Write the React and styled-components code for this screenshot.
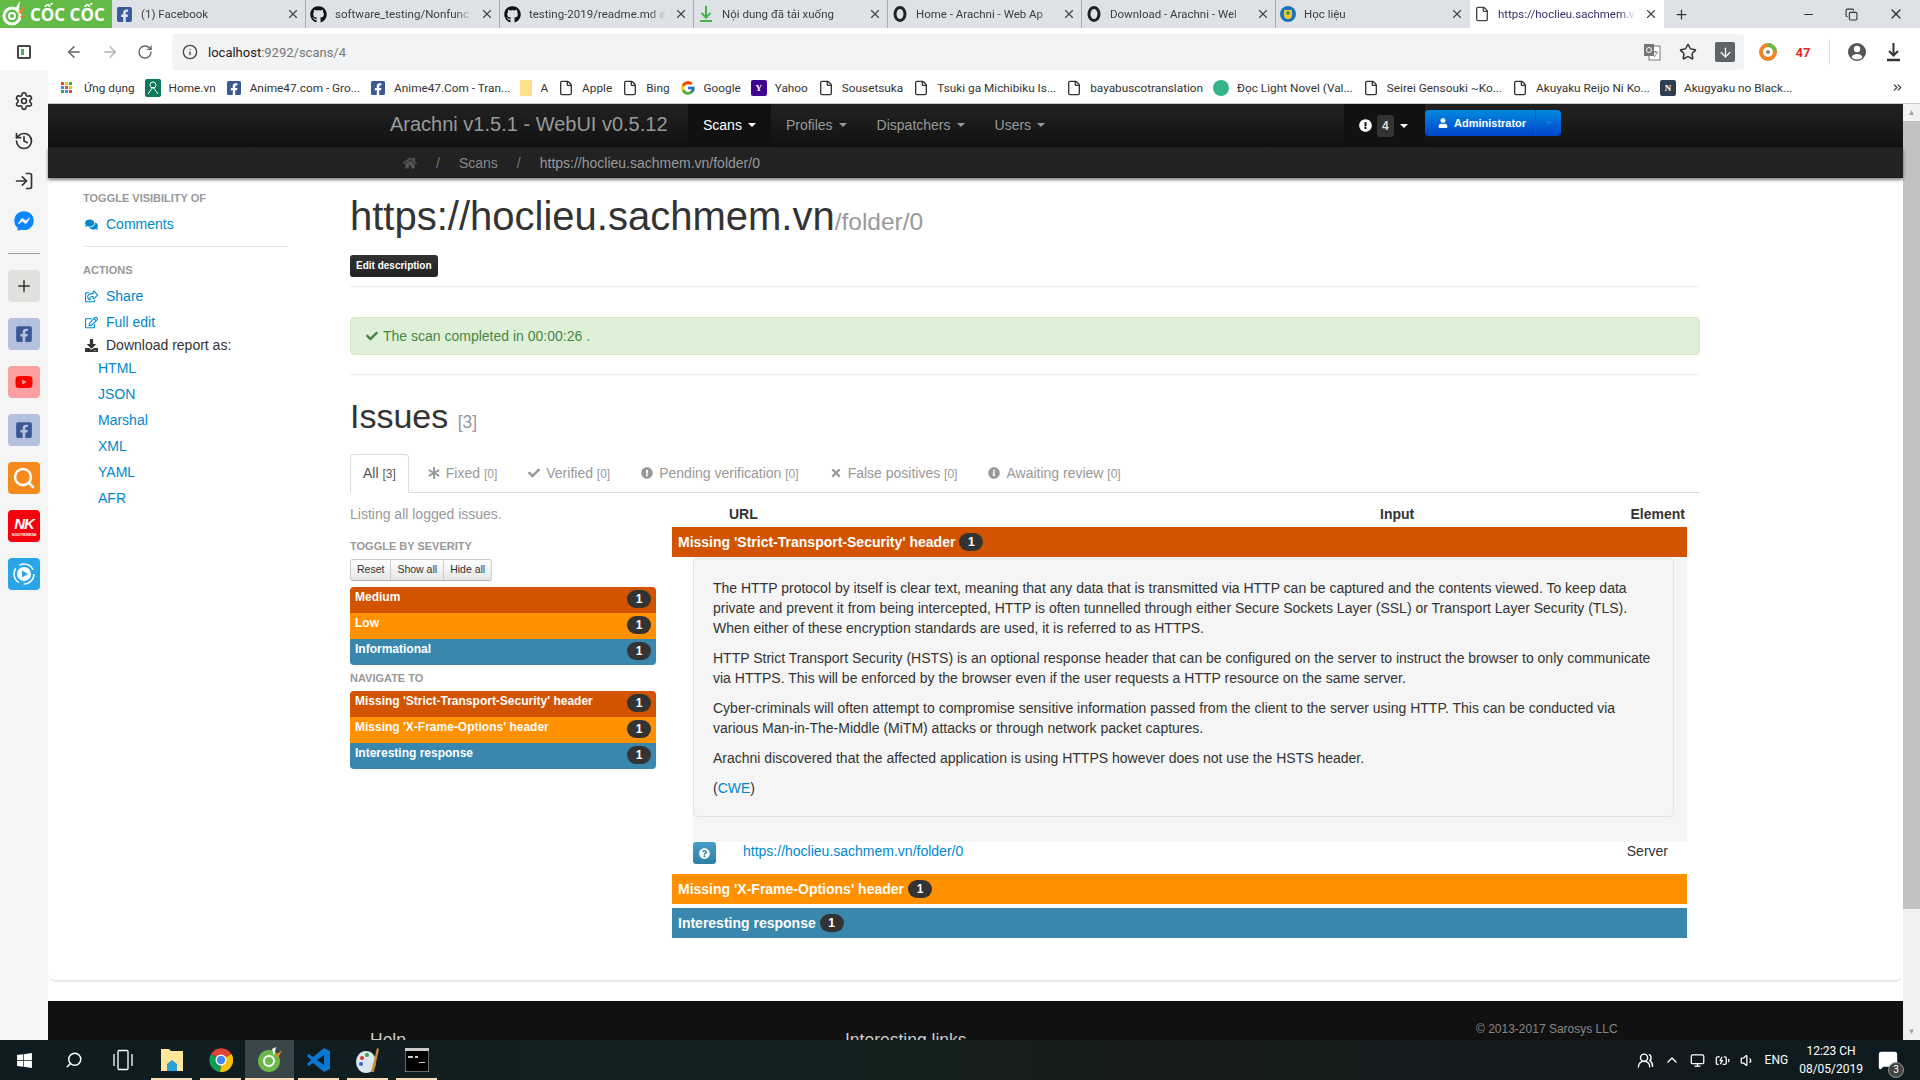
import React from 'react';
import styled, { createGlobalStyle } from 'styled-components';
import {
  FaAsterisk, FaCheck, FaComments, FaDownload, FaExclamationCircle, FaFacebookMessenger, FaFacebookSquare,
  FaGithub, FaHome, FaInfoCircle, FaQuestionCircle, FaRegEdit, FaRegShareSquare, FaTimes, FaUser, FaWindows, FaYoutube,
} from 'react-icons/fa';
import { FcGoogle } from 'react-icons/fc';
import {
  ArrowDown, ArrowLeft, ArrowRight, ChevronUp, Copy, File, History, LogIn, Minus, Plus, RotateCw, Search,
  Settings, Star, Volume1, X, Info, UsersRound, Monitor, BatteryCharging, MessageSquare, ChevronsRight,
} from 'lucide-react';

const Global = createGlobalStyle`
  html, body { margin: 0; padding: 0; overflow: hidden; background: #fff; }
  * { box-sizing: border-box; }
  body { font-family: "Liberation Sans", Arial, sans-serif; font-size: 14px; color: #333; }
`;

const Screen = styled.div`
  width: 1920px;
  height: 1080px;
  display: flex;
  flex-direction: column;
  overflow: hidden;
`;

/* browser chrome */
const TabStrip = styled.div`
  height: 28px;
  flex: none;
  display: flex;
  background: #dee1e6;
`;
const Logo = styled.div`
  width: 112px;
  flex: none;
  background: #62bb46;
  display: flex;
  align-items: center;
  gap: 3px;
  padding-left: 1px;
  color: #fff;
  font: bold 17px "Open Sans", sans-serif;
  white-space: nowrap;
`;
const Tab = styled.div`
  width: 194px;
  flex: none;
  display: flex;
  align-items: center;
  padding: 0 5px 0 4px;
  gap: 8px;
  font: 11.5px "Roboto", sans-serif;
  color: ${(p) => (p.$active ? '#3c2a6d' : '#3c4043')};
  background: ${(p) => (p.$active ? '#fff' : 'transparent')};
  border-right: 1px solid ${(p) => (p.$active || p.$last ? 'transparent' : '#a9acb0')};
  svg { flex: none; }
`;
const TabTitle = styled.span`
  flex: 1;
  white-space: nowrap;
  -webkit-mask-image: linear-gradient(to right, #000 88%, transparent);
  mask-image: linear-gradient(to right, #000 88%, transparent);
`;
const Spring = styled.div`
  flex: 1;
`;
const WindowBtns = styled.div`
  display: flex;
  align-items: center;
  gap: 30px;
  padding-right: 16px;
  color: #333;
`;
const NewTab = styled.div`
  display: flex;
  align-items: center;
  padding-left: 10px;
`;

const Toolbar = styled.div`
  height: 42px;
  flex: none;
  display: flex;
  align-items: center;
  background: #fff;
  padding-top: 6px;
  color: #5f6368;
`;
const NavIcons = styled.div`
  display: flex;
  align-items: center;
  gap: 18px;
  padding-left: 65px;
  padding-right: 19px;
`;
const Omnibox = styled.div`
  width: 1572px;
  height: 36px;
  flex: none;
  background: #f1f3f4;
  border-radius: 4px;
  display: flex;
  align-items: center;
  padding: 0 9px 0 10px;
  gap: 10px;
  font: 13px "Roboto", sans-serif;
  color: #777;
  b { font-weight: 400; color: #222; }
`;
const OmniTools = styled.div`
  display: flex;
  align-items: center;
  margin-left: auto;
  gap: 18px;
`;
const DownloadChip = styled.div`
  width: 20px;
  height: 20px;
  background: #5f6368;
  border-radius: 2px;
  color: #fff;
  display: flex;
  align-items: center;
  justify-content: center;
`;
const ToolRight = styled.div`
  display: flex;
  align-items: center;
  padding-left: 15px;
  gap: 18.5px;
`;
const RedCount = styled.span`
  color: #e8281f;
  font: bold 13px "Roboto", sans-serif;
`;
const ToolSep = styled.div`
  width: 1px;
  height: 26px;
  background: #ddd;
`;

const BookmarkBar = styled.div`
  height: 34px;
  flex: none;
  display: flex;
  align-items: center;
  background: #fff;
  padding: 2px 16px 0 61px;
  gap: 10px;
  font: 11.8px "Roboto", sans-serif;
  color: #333;
  border-bottom: 1px solid #ccc;
`;
const Bookmark = styled.div`
  display: flex;
  align-items: center;
  gap: ${(p) => p.$gap || 8}px;
  white-space: nowrap;
  svg { flex: none; }
`;
const AppsGrid = styled.div`
  display: grid;
  grid-template-columns: repeat(3, 3px);
  grid-auto-rows: 3px;
  gap: 1px;
`;
const AppDot = styled.i`
  background: ${(p) => p.$c};
`;
const Square = styled.div`
  width: ${(p) => p.$w || 16}px;
  height: 16px;
  flex: none;
  background: ${(p) => p.$bg};
  color: #fff;
  border-radius: ${(p) => p.$r || 2}px;
  display: flex;
  align-items: center;
  justify-content: center;
  font: bold 9px "Liberation Serif", serif;
`;

const Middle = styled.div`
  flex: 1;
  min-height: 0;
  display: flex;
`;

/* browser side rail, it starts up beside the address bar */
const Rail = styled.div`
  width: 48px;
  flex: none;
  background: #f5f5f5;
  display: flex;
  flex-direction: column;
  align-items: center;
  color: #333;
  margin-top: -70px;
  position: relative;
  height: calc(100% + 70px);
`;
const RailTop = styled.div`
  background: #fff;
  width: 48px;
  height: 36px;
  display: flex;
  align-items: center;
  justify-content: center;
`;
const RailIcons = styled.div`
  display: flex;
  flex-direction: column;
  align-items: center;
  gap: 20px;
  padding-top: 21px;
`;
const RailDivider = styled.div`
  width: 32px;
  height: 1px;
  background: #999;
  margin: 22px 0 16px;
`;
const RailApps = styled.div`
  display: flex;
  flex-direction: column;
  gap: 16px;
`;
const RailApp = styled.div`
  width: 32px;
  height: 32px;
  border-radius: 4px;
  background: ${(p) => p.$bg};
  color: ${(p) => p.$fg || '#fff'};
  display: flex;
  flex-direction: column;
  align-items: center;
  justify-content: center;
  line-height: 1;
`;
const NkMark = styled.span`
  font: italic bold 15px "Liberation Sans", sans-serif;
  letter-spacing: -1px;
`;
const NkSub = styled.span`
  font: bold 4px "Liberation Sans", sans-serif;
`;

/* the page */
const Viewport = styled.div`
  flex: 1;
  min-width: 0;
  display: flex;
  flex-direction: column;
  background: #fff;
`;
const NavBar = styled.div`
  height: 43px;
  flex: none;
  display: flex;
  align-items: stretch;
  padding-left: 342px;
  background: linear-gradient(#222, #111);
  font-size: 14px;
  color: #999;
`;
const Brand = styled.div`
  font-size: 20px;
  line-height: 40px;
  width: 298px;
  white-space: nowrap;
`;
const NavItem = styled.div`
  display: flex;
  align-items: center;
  gap: 5px;
  padding: 0 15px 2px;
  background: ${(p) => (p.$active ? '#111' : 'transparent')};
  color: ${(p) => (p.$active ? '#fff' : '#999')};
`;
const Caret = styled.i`
  width: 0;
  height: 0;
  border-top: 4px solid currentColor;
  border-left: 4px solid transparent;
  border-right: 4px solid transparent;
  margin-left: 1px;
`;
const NavRight = styled.div`
  display: flex;
  margin-left: auto;
  align-items: stretch;
  margin-right: 342px;
`;
const Alerts = styled.div`
  width: 81px;
  background: #111;
  color: #fff;
  display: flex;
  align-items: center;
  gap: 5px;
  padding-left: 15px;
`;
const AlertCount = styled.span`
  background: #333;
  border-radius: 3px;
  padding: 2px 5px;
  height: 22px;
  font: bold 12px/18px "Liberation Sans", sans-serif;
  color: #ddd;
`;
const AdminBtn = styled.div`
  height: 26px;
  margin-top: 6px;
  width: 136px;
  display: flex;
  border-radius: 4px;
  background: linear-gradient(#0088dd, #0044cc);
  color: #fff;
  font: bold 11px/25px "Liberation Sans", sans-serif;
`;
const AdminLabel = styled.div`
  flex: 1;
  display: flex;
  align-items: center;
  gap: 6px;
  padding-left: 13px;
  border-right: 1px solid #0a5cc4;
`;
const AdminCaret = styled.div`
  width: 25px;
  display: flex;
  align-items: center;
  justify-content: center;
  color: #0a7fe0;
`;
const Crumbs = styled.div`
  height: 31px;
  flex: none;
  display: flex;
  align-items: center;
  padding-left: 355px;
  gap: 19px;
  background: #222;
  color: #777;
  box-shadow: 0 2px 3px rgba(0, 0, 0, 0.5);
  position: relative;
  z-index: 2;
`;
const Crumb = styled.span`
  color: ${(p) => p.$c || '#888'};
`;

const Card = styled.div`
  height: 804px;
  flex: none;
  display: flex;
  border-bottom: 2px solid #e8e8e8;
  border-radius: 0 0 8px 8px;
  overflow: hidden;
`;
const SideCol = styled.div`
  width: 302px;
  flex: none;
  padding: 13px 0 0 35px;
`;
const SideHead = styled.div`
  font-size: 11px;
  font-weight: bold;
  color: #999;
  text-transform: uppercase;
  line-height: 14px;
  margin-bottom: 6px;
`;
const SideLink = styled.div`
  display: flex;
  align-items: center;
  gap: 8px;
  height: ${(p) => p.$h || 26}px;
  padding-left: 2px;
  color: ${(p) => p.$c || '#0088cc'};
  white-space: nowrap;
`;
const SideList = styled.div`
  padding-left: 15px;
`;
const SideSubLink = styled.div`
  height: 26px;
  line-height: 26px;
  color: #0088cc;
`;
const SideRule = styled.div`
  width: 204px;
  height: 1px;
  background: #e5e5e5;
  margin: 9px 0 16px 1px;
`;

const MainCol = styled.div`
  width: 1350px;
  flex: none;
`;
const Title = styled.h1`
  margin: 13px 0 0;
  height: 50px;
  font-size: 40px;
  line-height: 50px;
  font-weight: 400;
  color: #333;
  white-space: nowrap;
`;
const TitleRest = styled.small`
  font-size: 24.5px;
  color: #999;
`;
const DarkBtn = styled.div`
  width: fit-content;
  margin-top: 14px;
  height: 22px;
  padding: 0 6px;
  background: linear-gradient(#333, #222);
  border-radius: 3px;
  color: #fff;
  font-size: 10px;
  font-weight: bold;
  line-height: 21px;
`;
const Rule = styled.div`
  height: 1px;
  background: #eee;
  margin: ${(p) => p.$m};
`;
const Success = styled.div`
  height: 38px;
  background: #dff0d8;
  border: 1px solid #d6e9c6;
  border-radius: 4px;
  color: #468847;
  display: flex;
  align-items: center;
  gap: 5px;
  padding-left: 15px;
`;
const H2 = styled.h2`
  margin: 21px 0 0;
  height: 40px;
  font-size: 34px;
  line-height: 40px;
  font-weight: 400;
  color: #333;
`;
const H2Count = styled.small`
  font-size: 17.5px;
  color: #999;
`;
const TabsRow = styled.div`
  display: flex;
  height: 39px;
  margin-top: 18px;
  border-bottom: 1px solid #ddd;
`;
const PageTab = styled.div`
  height: ${(p) => (p.$active ? 39 : 38)}px;
  display: flex;
  align-items: center;
  gap: 6px;
  white-space: nowrap;
  padding: 0 12px ${(p) => (p.$active ? 1 : 0)}px;
  margin-right: 7px;
  color: ${(p) => (p.$active ? '#555' : '#999')};
  background: #fff;
  ${(p) => p.$active && 'border: 1px solid #ddd; border-bottom-color: #fff; border-radius: 4px 4px 0 0;'}
  small { font-size: 12px; }
`;
const Columns = styled.div`
  display: flex;
  gap: 16px;
`;
const FilterCol = styled.div`
  width: 306px;
  flex: none;
`;
const Muted = styled.div`
  color: #999;
  line-height: 20px;
  margin-top: 11px;
`;
const FilterHead = styled.div`
  font-size: 11px;
  font-weight: bold;
  color: #999;
  line-height: 14px;
  text-transform: uppercase;
  margin: ${(p) => p.$m};
`;
const BtnGroup = styled.div`
  display: flex;
  width: fit-content;
  height: 22px;
  border: 1px solid #ccc;
  border-bottom-color: #b3b3b3;
  border-radius: 3px;
  background: linear-gradient(#fff, #e6e6e6);
  font-size: 10.5px;
  line-height: 19px;
  color: #333;
`;
const GroupBtn = styled.div`
  padding: 0 6px;
  & + & { border-left: 1px solid #ccc; }
`;
const SevList = styled.div`
  border-radius: 4px;
  overflow: hidden;
  margin-top: ${(p) => p.$mt}px;
`;
const SevRow = styled.div`
  height: 26px;
  display: flex;
  justify-content: space-between;
  padding: 3px 5px 0 5px;
  background: ${(p) => p.$bg};
  color: #fff;
  font-size: 12px;
  font-weight: bold;
  line-height: 15px;
`;
const CountBadge = styled.span`
  width: 24px;
  height: 18px;
  border-radius: 9px;
  background: #333;
  color: #fff;
  font-size: 12px;
  font-weight: bold;
  line-height: 18px;
  text-align: center;
  flex: none;
  display: inline-block;
`;

const IssuesCol = styled.div`
  width: 1015px;
  flex: none;
`;
const IssueHead = styled.div`
  display: grid;
  grid-template-columns: 651px 1fr auto;
  height: 23px;
  margin-top: 11px;
  padding: 0 2px 0 57px;
  font-weight: bold;
  line-height: 20px;
`;
const IssueBar = styled.div`
  height: 30px;
  display: flex;
  align-items: center;
  gap: 4px;
  padding-left: 6px;
  background: ${(p) => p.$bg};
  color: #fff;
  font-size: 14px;
  font-weight: bold;
  margin-top: ${(p) => p.$mt || 0}px;
`;
const IssueBody = styled.div`
  margin: 1px 0 0 21px;
  background: #f5f5f5;
`;
const Well = styled.div`
  width: 981px;
  height: 259px;
  background: #f5f5f5;
  border: 1px solid #e3e3e3;
  border-radius: 4px;
  padding: 19px 19px 0;
  line-height: 20px;
  p { margin: 0 0 10px; }
`;
const WellLink = styled.span`
  color: #0088cc;
`;
const WellGap = styled.div`
  height: 25px;
`;
const IssueRow = styled.div`
  display: flex;
  align-items: flex-start;
  height: 32px;
  margin-left: 21px;
  padding-right: 19px;
`;
const SevBtn = styled.div`
  width: 23px;
  height: 22px;
  border-radius: 3px;
  background: linear-gradient(#46a0c8, #2f7ea3);
  color: #fff;
  display: flex;
  align-items: center;
  justify-content: center;
`;
const IssueUrl = styled.div`
  color: #0088cc;
  margin-left: 27px;
  flex: 1;
  line-height: 18px;
`;
const IssueEl = styled.div`
  line-height: 18px;
`;

const FooterGap = styled.div`
  height: 19px;
  flex: none;
`;
const Footer = styled.div`
  flex: 1;
  background: #111;
  display: flex;
  padding: 29px 0 0 322px;
  color: #ccc;
  overflow: hidden;
`;
const FooterHead = styled.div`
  font-size: 17.5px;
  width: 475px;
`;
const Copyright = styled.div`
  font-size: 12px;
  color: #888;
  margin: -8px 0 0 156px;
`;

const Scrollbar = styled.div`
  width: 17px;
  flex: none;
  background: #f1f1f1;
  display: flex;
  flex-direction: column;
  align-items: center;
  color: #a3a3a3;
  font-size: 8px;
`;
const ScrollArrow = styled.div`
  height: 17px;
  line-height: 17px;
`;
const Thumb = styled.div`
  width: 100%;
  height: 788px;
  background: #c1c1c1;
`;

/* windows taskbar */
const Taskbar = styled.div`
  height: 40px;
  flex: none;
  display: flex;
  align-items: center;
  background: linear-gradient(90deg, #0e1c22, #13211f 45%, #161c1a 60%, #0e1a20);
  color: #fff;
`;
const TaskSlot = styled.div`
  width: ${(p) => (p.$on ? 49 : 41)}px;
  margin: 0 ${(p) => (p.$on ? 0 : 4)}px;
  height: 40px;
  flex: none;
  display: flex;
  align-items: center;
  justify-content: center;
  background: ${(p) => (p.$on ? 'rgba(255,255,255,0.18)' : 'transparent')};
  box-shadow: ${(p) => (p.$run ? 'inset 0 -2px 0 #ffdcb5' : 'none')};
`;
const MirrorSearch = styled(Search)`
  transform: scaleX(-1);
`;
const Tray = styled.div`
  margin-left: auto;
  display: flex;
  align-items: center;
  gap: 10px;
  padding-right: 22px;
  font: 12px "Roboto", sans-serif;
`;
const Clock = styled.div`
  text-align: center;
  line-height: 18px;
  padding: 0 5px 0 1px;
`;
const Notify = styled.div`
  position: relative;
  display: flex;
`;
const NotifyBadge = styled.span`
  position: absolute;
  right: -6px;
  bottom: -8px;
  width: 16px;
  height: 16px;
  border-radius: 50%;
  background: #444;
  border: 1px solid #999;
  font-size: 10px;
  line-height: 14px;
  text-align: center;
`;

const CocCocMark = ({ size = 26 }) => (
  <svg width={size} height={size} viewBox="0 0 26 26">
    <circle cx="11" cy="15" r="8" fill="none" stroke="#fff" strokeWidth="3" />
    <circle cx="11" cy="15" r="3" fill="none" stroke="#fff" strokeWidth="2" />
    <path d="M14 8 L19 0 L18 8Z" fill="#fff" />
    <path d="M17 11 L25 5 L20 13Z" fill="#f58220" />
    <path d="M19 15 L26 14 L20 17Z" fill="#f58220" />
  </svg>
);

const RingFavicon = () => (
  <svg width="16" height="16" viewBox="0 0 16 16">
    <ellipse cx="8" cy="8" rx="5" ry="6.5" fill="none" stroke="#222" strokeWidth="3" />
  </svg>
);

const GlobeFavicon = () => (
  <svg width="16" height="16" viewBox="0 0 16 16">
    <circle cx="8" cy="8" r="8" fill="#1b75bb" />
    <path d="M4 4h8v5a4 4 0 0 1-8 0z" fill="#f4c430" />
    <circle cx="8" cy="7" r="2" fill="#4a9a4a" />
  </svg>
);

const DownloadGreen = () => (
  <svg width="16" height="18" viewBox="0 0 16 18">
    <path d="M8 1v11M3.5 8 8 12.5 12.5 8" fill="none" stroke="#4caf50" strokeWidth="2" />
    <path d="M2 16h12" stroke="#4caf50" strokeWidth="2" />
  </svg>
);

const TranslateIcon = () => (
  <svg width="18" height="18" viewBox="0 0 18 18">
    <rect x="6" y="3" width="11" height="14" fill="#fff" stroke="#777" />
    <rect x="1" y="1" width="10" height="12" fill="#777" />
    <circle cx="6" cy="7" r="2.5" fill="none" stroke="#fff" />
    <path d="M10 9h5M12.5 8v1M11 14l3-4" stroke="#777" fill="none" />
  </svg>
);

const ProfileIcon = () => (
  <svg width="18" height="20" viewBox="0 0 18 20">
    <circle cx="9" cy="10" r="9" fill="#555" />
    <circle cx="9" cy="7" r="3.2" fill="#fff" />
    <path d="M3.5 15.5c1-3 3-3.5 5.5-3.5s4.500.5 5.500 3.500c-3 2.600-8 2.600-11 0z" fill="#fff" />
  </svg>
);

const SaveIcon = () => (
  <svg width="17" height="20" viewBox="0 0 17 20">
    <path d="M8.500 1v12M4 9l4.500 4.500L13 9" fill="none" stroke="#333" strokeWidth="2" />
    <path d="M2 18h13" stroke="#333" strokeWidth="2.500" />
  </svg>
);

const ChromeLogo = () => (
  <svg width="24" height="24" viewBox="0 0 24 24">
    <path d="M12 12 L2 6 A12 12 0 0 1 22.5 6Z" fill="#db4437" />
    <path d="M12 12 L22.5 6 A12 12 0 0 1 11 24Z" fill="#f4c20d" />
    <path d="M12 12 L11 24 A12 12 0 0 1 2 6Z" fill="#0f9d58" />
    <circle cx="12" cy="12" r="5.5" fill="#fff" />
    <circle cx="12" cy="12" r="4.2" fill="#4285f4" />
  </svg>
);

const CocCocTask = () => (
  <svg width="26" height="26" viewBox="0 0 26 26">
    <circle cx="12" cy="14" r="11" fill="#6cb84a" />
    <circle cx="12" cy="14" r="5" fill="none" stroke="#fff" strokeWidth="2" />
    <path d="M15 2 L19 0 L17 9Z" fill="#fff" />
    <path d="M19 8 L25 3 L21 11Z" fill="#f58220" />
  </svg>
);

const FolderIcon = () => (
  <svg width="24" height="26" viewBox="0 0 24 26">
    <path d="M1 2h8l2 2h12v20H1z" fill="#ffe79a" />
    <path d="M7 24v-7l5-4 5 4v7z" fill="#2a9fd8" />
  </svg>
);

const TaskViewIcon = () => (
  <svg width="20" height="22" viewBox="0 0 20 22">
    <rect x="5" y="1.500" width="10" height="19" rx="1" fill="none" stroke="#fff" strokeWidth="1.300" />
    <path d="M1 5v12M19 5v12" stroke="#fff" strokeWidth="1.300" />
  </svg>
);

const VsCodeIcon = () => (
  <svg width="24" height="26" viewBox="0 0 24 26">
    <path d="M17 1 L23 4 V22 L17 25 L6 16 L2 19 L0 17 L4 13 L0 9 L2 7 L6 10Z M17 8 L10 13 L17 18Z" fill="#0a78d0" fillRule="evenodd" />
  </svg>
);

const PaintIcon = () => (
  <svg width="26" height="28" viewBox="0 0 26 28">
    <ellipse cx="11" cy="16" rx="10" ry="11" fill="#dce6ef" />
    <circle cx="7" cy="12" r="2" fill="#d33" />
    <circle cx="12" cy="9" r="2" fill="#3a3" />
    <circle cx="6" cy="18" r="2" fill="#36c" />
    <path d="M16 26 L22 2 L24 3 L19 26Z" fill="#c58a3c" />
  </svg>
);

const CmdIcon = () => (
  <svg width="24" height="24" viewBox="0 0 24 24">
    <rect width="24" height="24" fill="#000" stroke="#ccc" />
    <rect width="24" height="3" fill="#ccc" />
    <path d="M3 8h5v2H3zM10 8h3v2h-3zM14 14h6v1h-6z" fill="#ccc" />
  </svg>
);

const ShieldFavicon = () => (
  <svg width="16" height="18" viewBox="0 0 16 18">
    <rect width="16" height="18" rx="2" fill="#0b7a5b" />
    <circle cx="8" cy="6" r="3" fill="none" stroke="#fff" />
    <path d="M3 15 L8 8 L13 15" fill="none" stroke="#fff" />
  </svg>
);

const RingColored = () => (
  <svg width="18" height="20" viewBox="0 0 18 20">
    <circle cx="9" cy="10" r="7" fill="none" stroke="#f58220" strokeWidth="4" />
    <path d="M9 3a7 7 0 0 1 7 6" fill="none" stroke="#6cb84a" strokeWidth="4" />
    <circle cx="9" cy="10" r="2" fill="#888" />
  </svg>
);

const PlayEye = () => (
  <svg width="26" height="26" viewBox="0 0 26 26">
    <circle cx="13" cy="13" r="7" fill="#fff" />
    <circle cx="13" cy="13" r="10" fill="none" stroke="#fff" strokeWidth="1.5" strokeDasharray="16 5" />
    <path d="M11 9.5 L17 13 L11 16.5Z" fill="#2aa5e8" />
  </svg>
);

const tabs = [
  { title: '(1) Facebook', icon: <FaFacebookSquare size={17} color="#3b5998" /> },
  { title: 'software_testing/Nonfunc', icon: <FaGithub size={17} color="#111" /> },
  { title: 'testing-2019/readme.md a', icon: <FaGithub size={17} color="#111" /> },
  { title: 'Nội dung đã tải xuống', icon: <DownloadGreen /> },
  { title: 'Home - Arachni - Web Ap', icon: <RingFavicon /> },
  { title: 'Download - Arachni - Wel', icon: <RingFavicon /> },
  { title: 'Học liệu', icon: <GlobeFavicon /> },
];

const appColors = ['#ea4335', '#fbbc05', '#34a853', '#4285f4', '#ea4335', '#fbbc05', '#34a853', '#4285f4', '#ea4335'];

const bookmarks = [
  { t: 'Home.vn', i: <ShieldFavicon /> },
  { t: 'Anime47.com - Gro...', i: <FaFacebookSquare size={16} color="#3b5998" /> },
  { t: 'Anime47.Com - Tran...', i: <FaFacebookSquare size={16} color="#3b5998" /> },
  { t: 'A', i: <Square $w={12} $bg="#ffe08a" $r={1} /> },
  { t: 'Apple', i: <File size={16} /> },
  { t: 'Bing', i: <File size={16} /> },
  { t: 'Google', i: <FcGoogle size={16} /> },
  { t: 'Yahoo', i: <Square $bg="#400090">Y</Square> },
  { t: 'Sousetsuka', i: <File size={16} /> },
  { t: 'Tsuki ga Michibiku Is...', i: <File size={16} /> },
  { t: 'bayabuscotranslation', i: <File size={16} /> },
  { t: 'Đọc Light Novel (Val...', i: <Square $bg="#35b38a" $r={8} /> },
  { t: 'Seirei Gensouki ~Ko...', i: <File size={16} /> },
  { t: 'Akuyaku Reijo Ni Ko...', i: <File size={16} /> },
  { t: 'Akugyaku no Black...', i: <Square $bg="#2c3e50">N</Square> },
];

const severities = [
  { t: 'Medium', c: '#d35400' },
  { t: 'Low', c: '#ff9000' },
  { t: 'Informational', c: '#3a87ad' },
];
const navTo = [
  { t: "Missing 'Strict-Transport-Security' header", c: '#d35400' },
  { t: "Missing 'X-Frame-Options' header", c: '#ff9000' },
  { t: 'Interesting response', c: '#3a87ad' },
];
const SevGroup = ({ rows, mt }) => (
  <SevList $mt={mt}>
    {rows.map((r) => (
      <SevRow key={r.t} $bg={r.c}>
        {r.t}
        <CountBadge>1</CountBadge>
      </SevRow>
    ))}
  </SevList>
);

export default function App() {
  return (
    <Screen>
      <Global />
      <TabStrip>
        <Logo>
          <CocCocMark />
          CỐC CỐC
        </Logo>
        {tabs.map((t, i) => (
          <Tab key={t.title} $last={i === 6}>
            {t.icon}
            <TabTitle>{t.title}</TabTitle>
            <X size={14} color="#444" />
          </Tab>
        ))}
        <Tab $active>
          <File size={16} color="#444" />
          <TabTitle>https://hoclieu.sachmem.v</TabTitle>
          <X size={14} color="#444" />
        </Tab>
        <NewTab>
          <Plus size={15} color="#333" />
        </NewTab>
        <Spring />
        <WindowBtns>
          <Minus size={13} />
          <Copy size={13} />
          <X size={16} />
        </WindowBtns>
      </TabStrip>
      <Toolbar>
        <NavIcons>
          <ArrowLeft size={18} />
          <ArrowRight size={18} color="#b5b5b5" />
          <RotateCw size={16} />
        </NavIcons>
        <Omnibox>
          <Info size={16} color="#444" />
          <span><b>localhost</b>:9292/scans/4</span>
          <OmniTools>
            <TranslateIcon />
            <Star size={18} color="#333" />
            <DownloadChip><ArrowDown size={15} /></DownloadChip>
          </OmniTools>
        </Omnibox>
        <ToolRight>
          <RingColored />
          <RedCount>47</RedCount>
          <ToolSep />
          <ProfileIcon />
          <SaveIcon />
        </ToolRight>
      </Toolbar>
      <BookmarkBar>
        <Bookmark $gap={12}>
          <AppsGrid>
            {appColors.map((c, i) => <AppDot key={i} $c={c} />)}
          </AppsGrid>
          Ứng dụng
        </Bookmark>
        {bookmarks.map((b) => (
          <Bookmark key={b.t}>
            {b.i}
            {b.t}
          </Bookmark>
        ))}
        <Spring />
        <ChevronsRight size={13} />
      </BookmarkBar>
      <Middle>
        <Rail>
          <RailTop>
            <svg width="14" height="14" viewBox="0 0 14 14"><rect x="1" y="1" width="12" height="12" rx="1" fill="none" stroke="#444" strokeWidth="2" /><rect x="4" y="4" width="3" height="6" fill="#4caf50" /></svg>
          </RailTop>
          <RailIcons>
            <Settings size={20} />
            <History size={20} />
            <LogIn size={20} />
            <FaFacebookMessenger size={20} color="#0a84ff" />
          </RailIcons>
          <RailDivider />
          <RailApps>
            <RailApp $bg="#e0e0dd" $fg="#333"><Plus size={18} /></RailApp>
            <RailApp $bg="#b4c1dc"><FaFacebookSquare size={18} color="#3b5998" /></RailApp>
            <RailApp $bg="#fba0a0"><FaYoutube size={18} color="#ff0000" /></RailApp>
            <RailApp $bg="#b4c1dc"><FaFacebookSquare size={18} color="#3b5998" /></RailApp>
            <RailApp $bg="#f68a1f"><Search size={24} strokeWidth={2.5} /></RailApp>
            <RailApp $bg="#f5000f"><NkMark>NK</NkMark><NkSub>NGUYENKIM</NkSub></RailApp>
            <RailApp $bg="#2aa5e8"><PlayEye /></RailApp>
          </RailApps>
        </Rail>
        <Viewport>
          <NavBar>
            <Brand>Arachni v1.5.1 - WebUI v0.5.12</Brand>
            <NavItem $active>Scans<Caret /></NavItem>
            <NavItem>Profiles<Caret /></NavItem>
            <NavItem>Dispatchers<Caret /></NavItem>
            <NavItem>Users<Caret /></NavItem>
            <NavRight>
              <Alerts>
                <FaExclamationCircle size={13} />
                <AlertCount>4</AlertCount>
                <Caret />
              </Alerts>
              <AdminBtn>
                <AdminLabel><FaUser size={10} />Administrator</AdminLabel>
                <AdminCaret><Caret /></AdminCaret>
              </AdminBtn>
            </NavRight>
          </NavBar>
          <Crumbs>
            <FaHome size={14} color="#555" />
            <span>/</span>
            <Crumb>Scans</Crumb>
            <span>/</span>
            <Crumb $c="#999">https://hoclieu.sachmem.vn/folder/0</Crumb>
          </Crumbs>
          <Card>
            <SideCol>
              <SideHead>Toggle visibility of</SideHead>
              <SideLink><FaComments size={13} />Comments</SideLink>
              <SideRule />
              <SideHead>Actions</SideHead>
              <SideLink><FaRegShareSquare size={13} />Share</SideLink>
              <SideLink><FaRegEdit size={13} />Full edit</SideLink>
              <SideLink $h={20} $c="#333"><FaDownload size={13} />Download report as:</SideLink>
              <SideList>
                {['HTML', 'JSON', 'Marshal', 'XML', 'YAML', 'AFR'].map((f) => (
                  <SideSubLink key={f}>{f}</SideSubLink>
                ))}
              </SideList>
            </SideCol>
            <MainCol>
              <Title>https://hoclieu.sachmem.vn<TitleRest>/folder/0</TitleRest></Title>
              <DarkBtn>Edit description</DarkBtn>
              <Rule $m="9px 0 30px" />
              <Success><FaCheck size={12} />The scan completed in 00:00:26 .</Success>
              <Rule $m="19px 0 0" />
              <H2>Issues <H2Count>[3]</H2Count></H2>
              <TabsRow>
                <PageTab $active><span>All <small>[3]</small></span></PageTab>
                <PageTab><FaAsterisk size={12} /><span>Fixed <small>[0]</small></span></PageTab>
                <PageTab><FaCheck size={12} /><span>Verified <small>[0]</small></span></PageTab>
                <PageTab><FaExclamationCircle size={12} /><span>Pending verification <small>[0]</small></span></PageTab>
                <PageTab><FaTimes size={12} /><span>False positives <small>[0]</small></span></PageTab>
                <PageTab><FaInfoCircle size={12} /><span>Awaiting review <small>[0]</small></span></PageTab>
              </TabsRow>
              <Columns>
                <FilterCol>
                  <Muted>Listing all logged issues.</Muted>
                  <FilterHead $m="15px 0 6px">Toggle by severity</FilterHead>
                  <BtnGroup>
                    <GroupBtn>Reset</GroupBtn>
                    <GroupBtn>Show all</GroupBtn>
                    <GroupBtn>Hide all</GroupBtn>
                  </BtnGroup>
                  <SevGroup rows={severities} mt={6} />
                  <FilterHead $m="6px 0 6px">Navigate to</FilterHead>
                  <SevGroup rows={navTo} mt={0} />
                </FilterCol>
                <IssuesCol>
                  <IssueHead>
                    <span>URL</span>
                    <span>Input</span>
                    <span>Element</span>
                  </IssueHead>
                  <IssueBar $bg="#d35400">Missing 'Strict-Transport-Security' header <CountBadge>1</CountBadge></IssueBar>
                  <IssueBody>
                    <Well>
                      <p>The HTTP protocol by itself is clear text, meaning that any data that is transmitted via HTTP can be captured and the contents viewed. To keep data private and prevent it from being intercepted, HTTP is often tunnelled through either Secure Sockets Layer (SSL) or Transport Layer Security (TLS). When either of these encryption standards are used, it is referred to as HTTPS.</p>
                      <p>HTTP Strict Transport Security (HSTS) is an optional response header that can be configured on the server to instruct the browser to only communicate via HTTPS. This will be enforced by the browser even if the user requests a HTTP resource on the same server.</p>
                      <p>Cyber-criminals will often attempt to compromise sensitive information passed from the client to the server using HTTP. This can be conducted via various Man-in-The-Middle (MiTM) attacks or through network packet captures.</p>
                      <p>Arachni discovered that the affected application is using HTTPS however does not use the HSTS header.</p>
                      <p>(<WellLink>CWE</WellLink>)</p>
                    </Well>
                    <WellGap />
                  </IssueBody>
                  <IssueRow>
                    <SevBtn><FaQuestionCircle size={11} /></SevBtn>
                    <IssueUrl>https://hoclieu.sachmem.vn/folder/0</IssueUrl>
                    <IssueEl>Server</IssueEl>
                  </IssueRow>
                  <IssueBar $bg="#ff9000">Missing 'X-Frame-Options' header <CountBadge>1</CountBadge></IssueBar>
                  <IssueBar $bg="#3a87ad" $mt={4}>Interesting response <CountBadge>1</CountBadge></IssueBar>
                </IssuesCol>
              </Columns>
            </MainCol>
          </Card>
          <FooterGap />
          <Footer>
            <FooterHead>Help</FooterHead>
            <FooterHead>Interesting links</FooterHead>
            <Copyright>© 2013-2017 Sarosys LLC</Copyright>
          </Footer>
        </Viewport>
        <Scrollbar>
          <ScrollArrow>▲</ScrollArrow>
          <Thumb />
          <Spring />
          <ScrollArrow>▼</ScrollArrow>
        </Scrollbar>
      </Middle>
      <Taskbar>
        <TaskSlot><FaWindows size={17} /></TaskSlot>
        <TaskSlot><MirrorSearch size={18} /></TaskSlot>
        <TaskSlot><TaskViewIcon /></TaskSlot>
        <TaskSlot $run><FolderIcon /></TaskSlot>
        <TaskSlot $run><ChromeLogo /></TaskSlot>
        <TaskSlot $run $on><CocCocTask /></TaskSlot>
        <TaskSlot $run><VsCodeIcon /></TaskSlot>
        <TaskSlot $run><PaintIcon /></TaskSlot>
        <TaskSlot $run><CmdIcon /></TaskSlot>
        <Tray>
          <UsersRound size={17} />
          <ChevronUp size={16} />
          <Monitor size={15} />
          <BatteryCharging size={15} />
          <Volume1 size={15} />
          <span>ENG</span>
          <Clock>12:23 CH<br />08/05/2019</Clock>
          <Notify>
            <MessageSquare size={20} fill="#fff" />
            <NotifyBadge>3</NotifyBadge>
          </Notify>
        </Tray>
      </Taskbar>
    </Screen>
  );
}
